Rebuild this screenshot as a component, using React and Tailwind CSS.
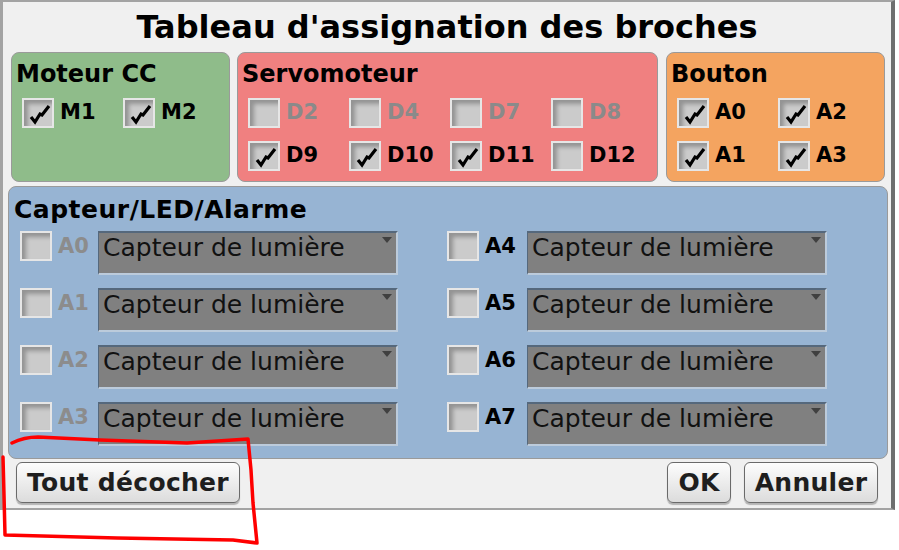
import React from "react";

const Check = ({ checked }) => (
  <div className="w-[32px] h-[30px] shrink-0 p-[2px] bg-[#e6e6e6]">
    <div className="relative w-full h-full bg-[#cbcbcb] shadow-[inset_4px_4px_4px_rgba(0,0,0,0.28)]">
      {checked && (
        <svg className="absolute left-0 top-0" width="28" height="26" viewBox="0 0 28 26">
          <path d="M7 17 L11 22 L16 14 L18 15 L25 6" fill="none" stroke="#000" strokeWidth="3.2" strokeLinejoin="miter" />
        </svg>
      )}
    </div>
  </div>
);

const Item = ({ label, checked, disabled }) => (
  <div className="flex items-center w-[101px] gap-[6px]">
    <Check checked={checked} />
    <span
      className={
        "text-[21px] leading-[30px] font-bold -mt-[2px] " +
        (disabled ? "text-[#8a8a8a]" : "text-black")
      }
    >
      {label}
    </span>
  </div>
);

const Panel = ({ title, color, width, rows }) => (
  <div className={"h-[130px] rounded-lg border border-[#9a9a9a] pt-[7px] pl-[4px] " + color + " " + width}>
    <div className="text-[24px] leading-[28px] font-bold text-black">{title}</div>
    <div className="mt-[10px] ml-[6px] flex flex-col gap-[13px]">
      {rows.map((row, i) => (
        <div key={i} className="flex">
          {row.map((it) => (
            <Item key={it.label} {...it} />
          ))}
        </div>
      ))}
    </div>
  </div>
);

const Select = ({ w }) => (
  <div className={"relative h-[44px] bg-[#808080] border-t-2 border-l border-[#55687c] border-r-2 border-b-2 border-r-[#bccbdb] border-b-[#bccbdb] pl-[4px] " + w}>
    <span className="text-[25px] leading-[30px] text-[#111] font-normal">Capteur de lumière</span>
    <svg className="absolute right-[4px] top-[4px]" width="10" height="6" viewBox="0 0 10 6">
      <path d="M0 0 L10 0 L5 6 Z" fill="#404040" />
    </svg>
  </div>
);

const SensorRow = ({ label, disabled, labelW, selW }) => (
  <div className="flex items-start">
    <Check />
    <div className={"pl-[6px] mt-[3px] text-[21px] leading-[24px] font-bold " + labelW + " " + (disabled ? "text-[#8c8c8c]" : "text-black")}>
      {label}
    </div>
    <Select w={selW} />
  </div>
);

const Button = ({ children, w }) => (
  <div className={"h-[41px] rounded-md border-[1.5px] border-[#6a6a6a] bg-gradient-to-b from-[#fdfdfd] to-[#dcdcdc] shadow-[0_2px_1px_rgba(0,0,0,0.25)] flex items-center justify-center text-[25px] tracking-[0.3px] font-bold text-[#1e1e1e] " + w}>
    {children}
  </div>
);

export default function App() {
  return (
    <div className="relative w-[899px] h-[550px] bg-white font-['DejaVu_Sans',sans-serif] overflow-hidden">
      <div className="w-[895px] h-[510px] bg-[#f0f0f0] border-t-2 border-l-[3px] border-b-2 border-[#a3a3a3] border-r-[4px] border-r-[#6e6e6e] flex flex-col">
        <div className="pt-[5px] h-[45px] text-center text-[32px] leading-[40px] font-bold text-black">
          Tableau d'assignation des broches
        </div>
        <div className="mt-[5px] ml-[8px] flex">
          <Panel
            title="Moteur CC"
            color="bg-[#8fbc8a]"
            width="w-[219px]"
            rows={[[{ label: "M1", checked: true }, { label: "M2", checked: true }]]}
          />
          <div className="w-[7px]" />
          <Panel
            title="Servomoteur"
            color="bg-[#f08080]"
            width="w-[421px]"
            rows={[
              [
                { label: "D2", disabled: true },
                { label: "D4", disabled: true },
                { label: "D7", disabled: true },
                { label: "D8", disabled: true },
              ],
              [
                { label: "D9", checked: true },
                { label: "D10", checked: true },
                { label: "D11", checked: true },
                { label: "D12" },
              ],
            ]}
          />
          <div className="w-[8px]" />
          <Panel
            title="Bouton"
            color="bg-[#f4a460]"
            width="w-[219px]"
            rows={[
              [{ label: "A0", checked: true }, { label: "A2", checked: true }],
              [{ label: "A1", checked: true }, { label: "A3", checked: true }],
            ]}
          />
        </div>
        <div className="mt-[4px] ml-[5px] w-[880px] h-[273px] rounded-lg border border-[#9a9a9a] bg-[#97b4d3] pt-[9px] pl-[5px]">
          <div className="text-[25px] leading-[28px] font-bold tracking-[0.5px] text-black">Capteur/LED/Alarme</div>
          <div className="mt-[7px] ml-[6px] grid grid-cols-[378px_380px] gap-x-[49px] gap-y-[13px] grid-flow-col grid-rows-4">
            <SensorRow label="A0" disabled labelW="w-[46px]" selW="w-[300px]" />
            <SensorRow label="A1" disabled labelW="w-[46px]" selW="w-[300px]" />
            <SensorRow label="A2" disabled labelW="w-[46px]" selW="w-[300px]" />
            <SensorRow label="A3" disabled labelW="w-[46px]" selW="w-[300px]" />
            <SensorRow label="A4" labelW="w-[48px]" selW="w-[300px]" />
            <SensorRow label="A5" labelW="w-[48px]" selW="w-[300px]" />
            <SensorRow label="A6" labelW="w-[48px]" selW="w-[300px]" />
            <SensorRow label="A7" labelW="w-[48px]" selW="w-[300px]" />
          </div>
        </div>
        <div className="mt-[3px] mx-[13px] flex items-start">
          <Button w="w-[224px]">Tout décocher</Button>
          <div className="flex-1" />
          <Button w="w-[64px]">OK</Button>
          <div className="w-[13px]" />
          <Button w="w-[134px]">Annuler</Button>
        </div>
      </div>
      <svg className="absolute left-0 top-0 pointer-events-none" width="899" height="550" viewBox="0 0 899 550">
        <path
          d="M12 443 C 20 439, 28 437, 38 437 L 100 440 L 187 443 L 248 439 L 251 470 L 253 503 L 257 543 L 233 540 L 117 538 L 5 535 L 4 495 L 3 457"
          fill="none"
          stroke="#ff0000"
          strokeWidth="3.5"
          strokeLinecap="round"
          strokeLinejoin="round"
        />
      </svg>
    </div>
  );
}
